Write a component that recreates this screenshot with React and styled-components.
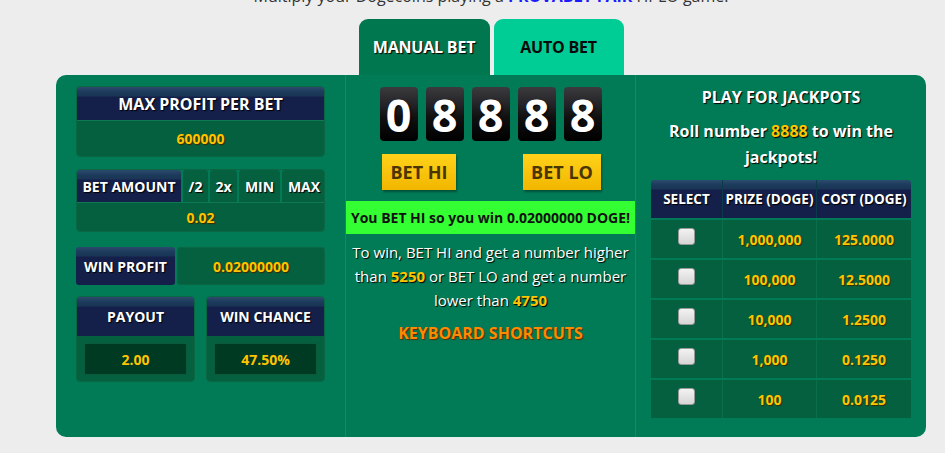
import React from 'react';
import styled, {createGlobalStyle} from 'styled-components';

const GlobalStyle = createGlobalStyle`
  html, body {
    margin: 0;
    padding: 0;
    background: #ededed;
    font-family: "Open Sans", "Liberation Sans", sans-serif;
    overflow: hidden;
  }
`;

const Page = styled.div`
  width: 870px;
  margin-left: 56px;
`;

const Intro = styled.p`
  margin: -16px 0 0;
  font-size: 16px;
  line-height: 24px;
  color: #333;
  text-align: center;
`;

const Provably = styled.span`
  color: #1b1bff;
  font-weight: 700;
`;

const Tabs = styled.div`
  display: flex;
  justify-content: center;
  gap: 4px;
  margin-top: 11px;
`;

const Tab = styled.div`
  width: ${p => p.$w}px;
  height: 56px;
  border-radius: 9px 9px 0 0;
  display: flex;
  align-items: center;
  justify-content: center;
  font-size: 16px;
  font-weight: 700;
  letter-spacing: -0.2px;
  background: ${p => p.$active ? '#00774f' : '#00cc96'};
  color: ${p => p.$active ? '#fff' : '#0a0a0a'};
  text-shadow: ${p => p.$active ? '1px 1px 1px #000' : 'none'};
`;

const Panel = styled.div`
  display: grid;
  grid-template-columns: 289px 291px 290px;
  height: 362px;
  background: #007b56;
  border-radius: 10px;
`;

const LeftCol = styled.div`
  padding: 11px 20px;
  display: flex;
  flex-direction: column;
`;

const MidCol = styled.div`
  border-left: 1px solid #0f8a64;
  border-right: 1px solid #0f8a64;
  display: flex;
  flex-direction: column;
  align-items: center;
`;

const RightCol = styled.div`
  padding: 0 15px;
  display: flex;
  flex-direction: column;
  align-items: center;
`;

const navy = `linear-gradient(#2c4b6c 0px, #1c3a5b 5px, #1a3556 9px, #141f4a 10px, #141f4a 100%)`;

const Block = styled.div`
  border-radius: 4px;
  overflow: hidden;
  border: 1px solid #0b6644;
  margin-top: ${p => p.$mt || 0}px;
`;

const BlockHead = styled.div`
  height: ${p => p.$h || 33}px;
  background: ${navy};
  color: #fff;
  font-weight: 700;
  font-size: ${p => p.$fs || 14}px;
  display: flex;
  align-items: center;
  justify-content: center;
  text-shadow: 1px 1px 1px #000;
`;

const Value = styled.div`
  height: ${p => p.$h || 35}px;
  background: #05603f;
  border-top: 1px solid #0d7a55;
  color: #ffc400;
  font-weight: 700;
  font-size: 14px;
  display: flex;
  align-items: center;
  justify-content: center;
  text-shadow: 1px 1px 1px #3a2a00;
`;

const BtnRow = styled.div`
  display: flex;
  gap: 2px;
  height: 32px;
`;

const SmallBtn = styled.div`
  flex: ${p => p.$label ? '0 0 104px' : `0 0 ${p.$w}px`};
  background: ${p => p.$label ? navy : '#05603f'};
  border-radius: 3px 3px 0 0;
  color: #fff;
  font-weight: 700;
  font-size: 14px;
  display: flex;
  align-items: center;
  justify-content: center;
  text-shadow: 1px 1px 1px #000;
`;

const SplitRow = styled.div`
  display: flex;
  gap: 2px;
  height: 38px;
  margin-top: 15px;
`;

const SplitLabel = styled(BlockHead)`
  flex: 0 0 99px;
  height: auto;
  border-radius: 3px;
`;

const SplitValue = styled(Value)`
  flex: 1;
  height: auto;
  border: 1px solid #0b6644;
  border-radius: 3px;
`;

const Pair = styled.div`
  display: grid;
  grid-template-columns: 119px 119px;
  justify-content: space-between;
  margin-top: 11px;
`;

const PairBody = styled.div`
  background: #05603f;
  padding: 7px 7px 6px;
`;

const Inner = styled.div`
  box-sizing: border-box;
  height: 32px;
  background: #013a22;
  border: 1px solid #0b5a3c;
  border-radius: 2px;
  color: #ffc400;
  font-weight: 700;
  font-size: 14px;
  display: flex;
  align-items: center;
  justify-content: center;
`;

const Digits = styled.div`
  display: flex;
  gap: 8px;
  margin-top: 12px;
`;

const Digit = styled.div`
  width: 38px;
  height: 54px;
  border-radius: 4px;
  background: linear-gradient(#3b3b3e 0%, #222226 35%, #111 55%, #000 100%);
  color: #fff;
  font-size: 45px;
  font-weight: 700;
  display: flex;
  align-items: center;
  justify-content: center;
  line-height: 1;
  text-shadow: 1px 1px 2px #000;
`;

const BetButtons = styled.div`
  align-self: stretch;
  display: flex;
  justify-content: space-between;
  padding: 0 34px 0 36px;
  margin-top: 13px;
`;

const BetBtn = styled.div`
  width: ${p => p.$w}px;
  height: 36px;
  background: linear-gradient(#ffd21a, #f2b600);
  box-shadow: 1px 2px 2px rgba(0, 0, 0, 0.35);
  color: #4a3500;
  font-weight: 700;
  font-size: 18px;
  display: flex;
  align-items: center;
  justify-content: center;
`;

const Banner = styled.div`
  align-self: stretch;
  height: 33px;
  margin-top: 11px;
  background: #33ff33;
  color: #111;
  font-weight: 700;
  font-size: 14px;
  display: flex;
  align-items: center;
  justify-content: center;
`;

const Explain = styled.p`
  margin: 6px 0 0;
  padding: 0 6px;
  font-size: 15px;
  line-height: 24px;
  color: #fff;
  text-align: center;
  text-shadow: 1px 1px 1px #000;
`;

const Gold = styled.span`
  color: #ffc400;
  font-weight: 700;
`;

const Shortcuts = styled.div`
  margin-top: 10px;
  color: #ff8a00;
  font-weight: 700;
  font-size: 16px;
  text-shadow: 1px 1px 1px #5a2a00;
`;

const JackTitle = styled.div`
  margin-top: 11px;
  line-height: 22px;
  color: #fff;
  font-weight: 700;
  font-size: 16px;
  text-shadow: 1px 1px 1px #000;
`;

const JackText = styled.p`
  margin: 10px 0 0;
  color: #fff;
  font-weight: 700;
  font-size: 16px;
  line-height: 26px;
  text-align: center;
  text-shadow: 1px 1px 1px #000;
`;

const Table = styled.div`
  align-self: stretch;
  margin-top: 10px;
  display: grid;
  grid-template-columns: 71px 94px 95px;
  grid-auto-rows: 38px;
  row-gap: 2px;
`;

const Th = styled.div`
  background: ${navy};
  color: #fff;
  font-weight: 700;
  font-size: 13.5px;
  white-space: nowrap;
  display: flex;
  align-items: center;
  justify-content: center;
  border-left: ${p => p.$first ? 'none' : '1px solid #0b3a4a'};
  border-radius: ${p => p.$first ? '3px 0 0 0' : p.$last ? '0 3px 0 0' : '0'};
  text-shadow: 1px 1px 1px #000;
`;

const Td = styled.div`
  background: #05603f;
  color: #ffc400;
  font-weight: 700;
  font-size: 14px;
  display: flex;
  align-items: center;
  justify-content: center;
  border-left: ${p => p.$first ? 'none' : '1px solid #0b6e4a'};
  text-shadow: 1px 1px 1px #3a2a00;
`;

const Check = styled.span`
  width: 17px;
  height: 17px;
  margin-top: -6px;
  border-radius: 3px;
  background: linear-gradient(#f2f2f2, #d6d6d6);
  border: 1px solid #9a9a9a;
  box-sizing: border-box;
`;

const jackpots = [
  ['1,000,000', '125.0000'],
  ['100,000', '12.5000'],
  ['10,000', '1.2500'],
  ['1,000', '0.1250'],
  ['100', '0.0125'],
];

export default function App() {
  return (
    <Page>
      <GlobalStyle />
      <Intro>Multiply your Dogecoins playing a <Provably>PROVABLY FAIR</Provably> HI-LO game.</Intro>
      <Tabs>
        <Tab $active $w={131}>MANUAL BET</Tab>
        <Tab $w={130}>AUTO BET</Tab>
      </Tabs>
      <Panel>
        <LeftCol>
          <Block>
            <BlockHead $fs={16}>MAX PROFIT PER BET</BlockHead>
            <Value>600000</Value>
          </Block>
          <Block $mt={12}>
            <BtnRow>
              <SmallBtn $label>BET AMOUNT</SmallBtn>
              <SmallBtn $w={25}>/2</SmallBtn>
              <SmallBtn $w={27}>2x</SmallBtn>
              <SmallBtn $w={41}>MIN</SmallBtn>
              <SmallBtn $w={44}>MAX</SmallBtn>
            </BtnRow>
            <Value $h={28}>0.02</Value>
          </Block>
          <SplitRow>
            <SplitLabel>WIN PROFIT</SplitLabel>
            <SplitValue>0.02000000</SplitValue>
          </SplitRow>
          <Pair>
            <Block>
              <BlockHead $h={39}>PAYOUT</BlockHead>
              <PairBody><Inner>2.00</Inner></PairBody>
            </Block>
            <Block>
              <BlockHead $h={39}>WIN CHANCE</BlockHead>
              <PairBody><Inner>47.50%</Inner></PairBody>
            </Block>
          </Pair>
        </LeftCol>

        <MidCol>
          <Digits>
            {['0', '8', '8', '8', '8'].map((d, i) => <Digit key={i}>{d}</Digit>)}
          </Digits>
          <BetButtons>
            <BetBtn $w={74}>BET HI</BetBtn>
            <BetBtn $w={78}>BET LO</BetBtn>
          </BetButtons>
          <Banner>You BET HI so you win 0.02000000 DOGE!</Banner>
          <Explain>
            To win, BET HI and get a number higher than <Gold>5250</Gold> or BET LO and get a number lower than <Gold>4750</Gold>
          </Explain>
          <Shortcuts>KEYBOARD SHORTCUTS</Shortcuts>
        </MidCol>

        <RightCol>
          <JackTitle>PLAY FOR JACKPOTS</JackTitle>
          <JackText>Roll number <Gold>8888</Gold> to win the<br />jackpots!</JackText>
          <Table>
            <Th $first>SELECT</Th>
            <Th>PRIZE (DOGE)</Th>
            <Th $last>COST (DOGE)</Th>
            {jackpots.map(([prize, cost]) => (
              <React.Fragment key={prize}>
                <Td $first><Check /></Td>
                <Td>{prize}</Td>
                <Td>{cost}</Td>
              </React.Fragment>
            ))}
          </Table>
        </RightCol>
      </Panel>
    </Page>
  );
}
